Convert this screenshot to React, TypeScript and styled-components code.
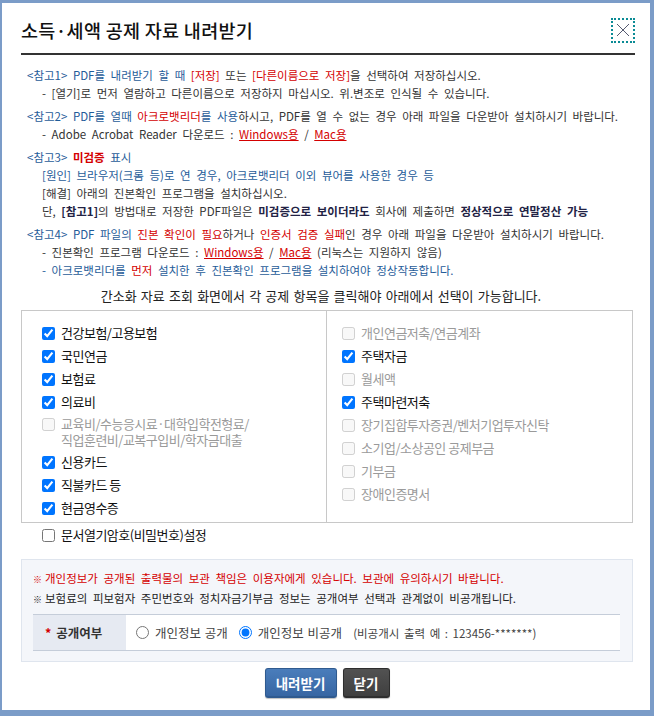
import React from 'react';
import styled, {createGlobalStyle} from 'styled-components';

const GlobalStyle = createGlobalStyle`
	html, body {
		margin: 0;
		padding: 0;
		background: #ffffff;
	}
	body {
		font-family: "Noto Sans CJK KR", "Noto Sans", sans-serif;
		color: #333333;
	}
	* {
		box-sizing: border-box;
	}
`;

const Frame = styled.div`
	width: 654px;
	height: 716px;
	border-style: solid;
	border-color: #7b9cc8;
	border-width: 3px 4px 6px 2px;
	background: white;
	padding: 0 15px 0 19px;
	display: flex;
	flex-direction: column;
`;

const Header = styled.div`
	height: 52px;
	padding-top: 4px;
	display: flex;
	align-items: center;
	justify-content: space-between;
	border-bottom: 2px solid #333333;
`;

const Title = styled.h1`
	margin: 0;
	font-size: 18.5px;
	font-weight: 500;
	color: #111111;
	letter-spacing: 0.3px;
`;

const CloseButton = styled.button`
	width: 24px;
	height: 25px;
	padding: 0;
	background: white;
	border: 2px dotted #0b8b95;
	display: flex;
	align-items: center;
	justify-content: center;
	cursor: pointer;
`;

const Notes = styled.div`
	margin-top: 11px;
	padding-left: 6px;
	font-size: 11.5px;
	line-height: 18px;
	word-spacing: 3px;
	color: #333333;
`;

const NoteGroup = styled.div`
	& + & {
		margin-top: 5px;
	}
`;

const Line = styled.div<{ $indent?: boolean }>`
	white-space: nowrap;
	padding-left: ${p => (p.$indent ? '15px' : '0')};
`;

const colors = {
	blue: '#1f5c99',
	red: '#d40000',
	black: '#333333',
	dark: '#222244',
};

const Seg = styled.span<{ $c?: keyof typeof colors; $b?: boolean; $u?: boolean }>`
	color: ${p => colors[p.$c || 'black']};
	font-weight: ${p => (p.$b ? 700 : 400)};
	text-decoration: ${p => (p.$u ? 'underline' : 'none')};
`;

const Guide = styled.div`
	margin-top: 8px;
	font-size: 13px;
	line-height: 18px;
	word-spacing: 1.3px;
	text-align: center;
	color: #222222;
	padding-right: 14px;
`;

const Panel = styled.div`
	margin-top: 5px;
	margin-right: 2px;
	height: 213px;
	border: 1px solid #c8c8c8;
	display: grid;
	grid-template-columns: 305px 1fr;
`;

const Column = styled.div<{ $left?: boolean }>`
	display: flex;
	flex-direction: column;
	gap: 9px;
	padding: 15px 0 8px ${p => (p.$left ? '20px' : '15px')};
	border-right: ${p => (p.$left ? '1px solid #c8c8c8' : 'none')};
`;

const Item = styled.label<{ $off?: boolean; $multi?: boolean }>`
	display: flex;
	align-items: flex-start;
	gap: 6px;
	font-size: 13px;
	line-height: ${p => (p.$multi ? '16px' : '14px')};
	margin: ${p => (p.$multi ? '-2px 0' : '0')};
	letter-spacing: -0.5px;
	color: ${p => (p.$off ? '#9a9a9a' : '#111111')};
`;

const Check = styled.input<{ $multi?: boolean }>`
	width: 13px;
	height: 13px;
	margin: ${p => (p.$multi ? '2px' : '0.5px')} 0 0 0;
	flex: none;
	accent-color: #0075ff;
`;

const PwRow = styled.div`
	margin-top: 5px;
	padding-left: 21px;
`;

const InfoBox = styled.div`
	margin-top: 17px;
	margin-right: 2px;
	background: #f4f6fa;
	border: 1px solid #dfe5ee;
	padding: 9px 12px 10px 11px;
`;

const Warn = styled.div<{ $red?: boolean }>`
	font-size: 11.5px;
	line-height: 18px;
	word-spacing: 3px;
	white-space: nowrap;
	color: ${p => (p.$red ? '#d40000' : '#222222')};
`;

const Mark = styled.span`
	font-size: 9px;
	margin-right: 3px;
`;

const Table = styled.div`
	margin-top: 5px;
	display: flex;
	height: 37px;
	border-top: 1px solid #c5cdd9;
	border-bottom: 1px solid #c5cdd9;
`;

const HeadCell = styled.div`
	width: 93px;
	background: #e6eaf2;
	display: flex;
	align-items: center;
	padding-left: 12px;
	font-size: 12.5px;
	font-weight: 700;
	color: #333333;
	gap: 5px;
`;

const Star = styled.span`
	color: #d40000;
`;

const ValueCell = styled.div`
	flex: 1;
	background: white;
	display: flex;
	align-items: center;
	padding-left: 10px;
`;

const RadioLabel = styled.label`
	display: flex;
	align-items: center;
	gap: 6px;
	font-size: 12.5px;
	word-spacing: 1px;
	color: #444444;
	margin-right: 11px;
`;

const Radio = styled.input`
	width: 13px;
	height: 13px;
	margin: 0;
	accent-color: #0075ff;
`;

const Example = styled.span`
	font-size: 11.5px;
	word-spacing: 2px;
	color: #444444;
	margin-left: 0;
`;

const Buttons = styled.div`
	margin-top: 6px;
	display: flex;
	justify-content: center;
	gap: 6px;
	padding-right: 2px;
`;

const Btn = styled.button<{ $dark?: boolean; $w: number }>`
	width: ${p => p.$w}px;
	height: 30px;
	border-radius: 3px;
	border: 1px solid ${p => (p.$dark ? '#2e2e2e' : '#2f5a8f')};
	border-bottom-width: 2px;
	background: ${p => (p.$dark
		? 'linear-gradient(#525252, #3f3f3f)'
		: 'linear-gradient(#4a7dbb, #3766a3)')};
	color: white;
	font-family: "Noto Sans CJK KR", sans-serif;
	font-size: 13.5px;
	font-weight: 700;
	cursor: pointer;
	box-shadow: 0 1px 1px rgba(0, 0, 0, 0.25);
`;

const leftItems = [
	{label: '건강보험/고용보험', on: true},
	{label: '국민연금', on: true},
	{label: '보험료', on: true},
	{label: '의료비', on: true},
	{label: '교육비/수능응시료·대학입학전형료/\n직업훈련비/교복구입비/학자금대출', on: false, off: true},
	{label: '신용카드', on: true},
	{label: '직불카드 등', on: true},
	{label: '현금영수증', on: true},
];

const rightItems = [
	{label: '개인연금저축/연금계좌', on: false, off: true},
	{label: '주택자금', on: true},
	{label: '월세액', on: false, off: true},
	{label: '주택마련저축', on: true},
	{label: '장기집합투자증권/벤처기업투자신탁', on: false, off: true},
	{label: '소기업/소상공인 공제부금', on: false, off: true},
	{label: '기부금', on: false, off: true},
	{label: '장애인증명서', on: false, off: true},
];

type Entry = { label: string; on: boolean; off?: boolean };

const Items = ({list}: { list: Entry[] }) => (
	<>
		{list.map(it => {
			const lines = it.label.split('\n');
			const multi = lines.length > 1;
			return (
				<Item key={it.label} $off={it.off} $multi={multi}>
					<Check type="checkbox" defaultChecked={it.on} disabled={it.off} $multi={multi}/>
					<span>
						{lines.map((t, i) => <div key={i}>{t}</div>)}
					</span>
				</Item>
			);
		})}
	</>
);

const App = () => {
	return (
		<Frame>
			<GlobalStyle/>
			<Header>
				<Title>소득·세액 공제 자료 내려받기</Title>
				<CloseButton aria-label="닫기">
					<svg width="14" height="14" viewBox="0 0 14 14">
						<path d="M1 1 L13 13 M13 1 L1 13" stroke="#555a70" strokeWidth="1"/>
					</svg>
				</CloseButton>
			</Header>

			<Notes>
				<NoteGroup>
					<Line>
						<Seg $c="blue">&lt;참고1&gt; PDF를 내려받기 할 때 </Seg>
						<Seg $c="red">[저장]</Seg> 또는 <Seg $c="red">[다른이름으로 저장]</Seg>을 선택하여 저장하십시오.
					</Line>
					<Line $indent>- [열기]로 먼저 열람하고 다른이름으로 저장하지 마십시오. 위.변조로 인식될 수 있습니다.</Line>
				</NoteGroup>
				<NoteGroup>
					<Line>
						<Seg $c="blue">&lt;참고2&gt; PDF를 열때 </Seg>
						<Seg $c="red">아크로뱃리더</Seg><Seg $c="blue">를 사용</Seg>하시고, PDF를 열 수 없는 경우 아래 파일을 다운받아 설치하시기 바랍니다.
					</Line>
					<Line $indent>
						- Adobe Acrobat Reader 다운로드 : <Seg $c="red" $u>Windows용</Seg> / <Seg $c="red" $u>Mac용</Seg>
					</Line>
				</NoteGroup>
				<NoteGroup>
					<Line>
						<Seg $c="blue">&lt;참고3&gt; </Seg><Seg $c="red" $b>미검증</Seg><Seg $c="blue"> 표시</Seg>
					</Line>
					<Line $indent><Seg $c="blue">[원인] 브라우저(크롬 등)로 연 경우, 아크로뱃리더 이외 뷰어를 사용한 경우 등</Seg></Line>
					<Line $indent>[해결] 아래의 진본확인 프로그램을 설치하십시오.</Line>
					<Line $indent>
						단, <Seg $c="dark" $b>[참고1]</Seg>의 방법대로 저장한 PDF파일은 <Seg $c="dark" $b>미검증으로 보이더라도</Seg> 회사에 제출하면 <Seg $c="dark" $b>정상적으로 연말정산 가능</Seg>
					</Line>
				</NoteGroup>
				<NoteGroup>
					<Line>
						<Seg $c="blue">&lt;참고4&gt; PDF 파일의 </Seg><Seg $c="red">진본 확인이 필요</Seg>하거나 <Seg $c="red">인증서 검증 실패</Seg>인 경우 아래 파일을 다운받아 설치하시기 바랍니다.
					</Line>
					<Line $indent>
						- 진본확인 프로그램 다운로드 : <Seg $c="red" $u>Windows용</Seg> / <Seg $c="red" $u>Mac용</Seg> (리눅스는 지원하지 않음)
					</Line>
					<Line $indent>
						<Seg $c="blue">- 아크로뱃리더를 </Seg><Seg $c="red">먼저</Seg><Seg $c="blue"> 설치한 후 진본확인 프로그램을 설치하여야 정상작동합니다.</Seg>
					</Line>
				</NoteGroup>
			</Notes>

			<Guide>간소화 자료 조회 화면에서 각 공제 항목을 클릭해야 아래에서 선택이 가능합니다.</Guide>

			<Panel>
				<Column $left>
					<Items list={leftItems}/>
				</Column>
				<Column>
					<Items list={rightItems}/>
				</Column>
			</Panel>

			<PwRow>
				<Item>
					<Check type="checkbox"/>
					<span>문서열기암호(비밀번호)설정</span>
				</Item>
			</PwRow>

			<InfoBox>
				<Warn $red><Mark>※</Mark>개인정보가 공개된 출력물의 보관 책임은 이용자에게 있습니다. 보관에 유의하시기 바랍니다.</Warn>
				<Warn><Mark>※</Mark>보험료의 피보험자 주민번호와 정치자금기부금 정보는 공개여부 선택과 관계없이 비공개됩니다.</Warn>
				<Table>
					<HeadCell><Star>*</Star>공개여부</HeadCell>
					<ValueCell>
						<RadioLabel>
							<Radio type="radio" name="open"/>
							개인정보 공개
						</RadioLabel>
						<RadioLabel>
							<Radio type="radio" name="open" defaultChecked/>
							개인정보 비공개
						</RadioLabel>
						<Example>(비공개시 출력 예 : 123456-*******)</Example>
					</ValueCell>
				</Table>
			</InfoBox>

			<Buttons>
				<Btn $w={72}>내려받기</Btn>
				<Btn $w={47} $dark>닫기</Btn>
			</Buttons>
		</Frame>
	);
};

export default App;
